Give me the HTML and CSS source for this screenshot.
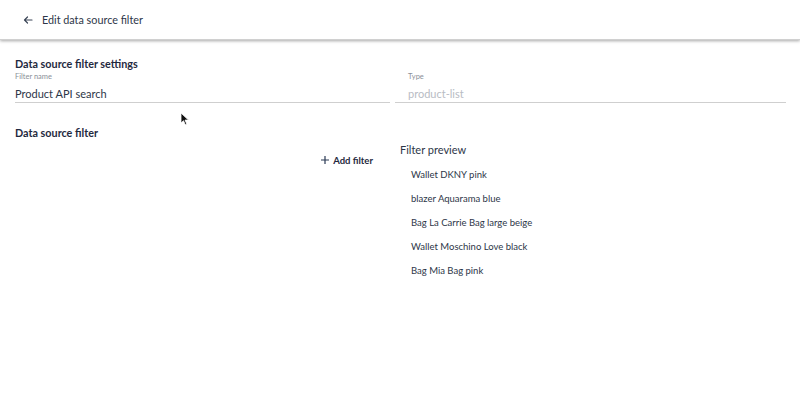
FILE: index.html
```html
<!DOCTYPE html>
<html>
<head>
<meta charset="utf-8">
<link rel="stylesheet" href="styles.css">
</head>
<body>
<header class="topbar">
  <svg class="back" width="12" height="12" viewBox="0 0 12 12"><path d="M10 6H2.5M5.5 3L2.5 6l3 3" fill="none" stroke="#3a4556" stroke-width="1.2" stroke-linecap="round" stroke-linejoin="round"/></svg>
  <span class="title">Edit data source filter</span>
</header>
<main class="content">
  <h2 class="section">Data source filter settings</h2>
  <div class="fields">
    <div class="field">
      <div class="label">Filter name</div>
      <div class="value">Product API search</div>
    </div>
    <div class="field right">
      <div class="label">Type</div>
      <div class="value muted">product-list</div>
    </div>
  </div>
  <h2 class="section second">Data source filter</h2>
  <div class="cols">
    <div class="leftcol">
      <button class="add"><svg width="10" height="10" viewBox="0 0 10 10"><path d="M5 1v8M1 5h8" stroke="#2b3a55" stroke-width="1.2"/></svg>Add filter</button>
    </div>
    <div class="rightcol">
      <div class="ptitle">Filter preview</div>
      <ul class="list">
        <li>Wallet DKNY pink</li>
        <li>blazer Aquarama blue</li>
        <li>Bag La Carrie Bag large beige</li>
        <li>Wallet Moschino Love black</li>
        <li>Bag Mia Bag pink</li>
      </ul>
    </div>
  </div>
  <svg class="cursor" width="10" height="14" viewBox="0 0 10 14"><path d="M1 1v10l2.5-2.3 1.8 4 1.5-.7-1.8-3.9H8.5z" fill="#111" stroke="#fff" stroke-width=".8"/></svg>
</main>
</body>
</html>
```
FILE: styles.css
```css
html, body { margin: 0; padding: 0; background: #fff; }
body { font-family: Lato, "Noto Sans", sans-serif; color: #27324a; width: 800px; height: 411px; overflow: hidden; position: relative; }
.topbar { height: 40px; display: flex; align-items: center; padding-left: 22px; box-shadow: 0 1px 3px rgba(0,0,0,0.35); border-bottom: 1px solid #d0d0d0; box-sizing: border-box; }
.back { margin-right: 8px; margin-top: 0; }
.title { font-size: 10.8px; color: #2d3648; }
.content { padding: 17px 15px 0 15px; position: relative; }
.section { margin: 0 0 1px 0; font-size: 10.8px; font-weight: 700; color: #1f2940; line-height: 14px; }
.second { margin-top: 23px; }
.fields { display: flex; margin-top: 0; }
.field { flex: 0 0 375px; border-bottom: 1px solid #cfcfcf; height: 31px; box-sizing: border-box; }
.field.right { flex: 0 0 391px; margin-left: 5px; padding-left: 13px; }
.label { font-size: 7.5px; color: #8a8f98; line-height: 10px; }
.value { font-size: 11px; color: #2d3648; line-height: 14px; margin-top: 5px; }
.muted { color: #b8bcc4; }
.cols { display: flex; }
.leftcol { width: 372px; display: flex; justify-content: flex-end; padding-top: 12px; box-sizing: border-box; padding-right: 14px; }
.add { border: 0; background: none; font-family: inherit; font-weight: 700; font-size: 9.5px; color: #1f2940; display: flex; align-items: center; gap: 3px; padding: 0; height: 14px; }
.rightcol { padding-left: 13px; padding-top: 2px; }
.ptitle { font-size: 11px; color: #2d3648; line-height: 14px; }
.list { list-style: none; margin: 11px 0 0 11px; padding: 0; }
.list li { font-size: 9.5px; color: #2d3648; height: 24px; line-height: 14px; }
.cursor { position: absolute; left: 180px; top: 72px; }
```
